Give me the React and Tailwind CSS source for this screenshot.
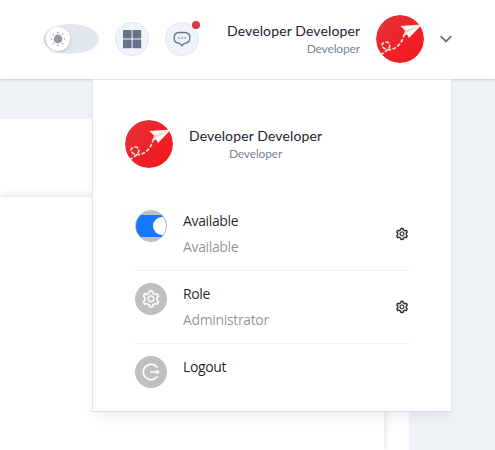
import React from "react";
import { AiOutlineSetting, AiOutlineLogout } from "react-icons/ai";

function Avatar() {
  return (
    <svg className="size-12 shrink-0 rounded-full" viewBox="0 0 48 48" fill="none">
      <defs>
        <linearGradient id="red" x1="0" y1="0" x2="1" y2="1">
          <stop offset="0" stopColor="#e4343c" />
          <stop offset=".6" stopColor="#f01f26" />
          <stop offset="1" stopColor="#f51820" />
        </linearGradient>
      </defs>
      <circle cx="24" cy="24" r="24" fill="url(#red)" />
      <path
        d="M4.500 40C8 37.500 12.500 35 13.500 32C14.500 29 12.500 26.800 10 27C6.500 27.300 4.800 30 6.800 32.300C9 34.800 14 35.500 18 33.500C23 31 27 26 28.500 18"
        stroke="#fbe3d5"
        strokeWidth="1.700"
        strokeDasharray="3.800 1.600"
      />
      <path d="M24.500 11L46 9.500L33 23L31 19.500L28 20.500L29 15.500Z" fill="#fff8f1" />
      <path d="M29 15.500L44 10.500L31 17.500L28 20.500Z" fill="#eed1c3" />
    </svg>
  );
}

function ThemeToggle() {
  return (
    <div className="flex h-[30px] w-14 shrink-0 items-center rounded-[50%] bg-[#e2e8f0] pl-[3px]">
      <span className="flex size-6 items-center justify-center rounded-full bg-white shadow-[0_1px_3px_rgba(0,0,0,0.2)]">
        <svg className="size-4" viewBox="0 0 16 16" fill="#969aa1">
          <circle cx="8" cy="8" r="4.400" />
          <circle cx="8" cy="1.500" r=".75" />
          <circle cx="8" cy="14.500" r=".75" />
          <circle cx="1.500" cy="8" r=".75" />
          <circle cx="14.500" cy="8" r=".75" />
          <circle cx="3.400" cy="3.400" r=".75" />
          <circle cx="12.600" cy="3.400" r=".75" />
          <circle cx="3.400" cy="12.600" r=".75" />
          <circle cx="12.600" cy="12.600" r=".75" />
        </svg>
      </span>
    </div>
  );
}

function Header() {
  return (
    <header className="relative flex h-[79px] items-center bg-white pb-px pl-[43px] shadow-[0_1px_3px_rgba(0,0,0,0.18)]">
      <ThemeToggle />
      <button className="ml-4 flex size-[34px] shrink-0 items-center justify-center rounded-full border border-[#e2e8f0] bg-[#eff4fb]">
        <svg className="size-[20px]" viewBox="0 0 20 20" fill="#64748b">
          <rect x="1" y="1" width="8.600" height="8.600" rx=".6" />
          <rect x="10.600" y="1" width="8.600" height="8.600" rx=".6" />
          <rect x="1" y="10.600" width="8.600" height="8.600" rx=".6" />
          <rect x="10.600" y="10.600" width="8.600" height="8.600" rx=".6" />
        </svg>
      </button>
      <button className="relative ml-4 flex size-[34px] shrink-0 items-center justify-center rounded-full border border-[#e2e8f0] bg-[#eff4fb]">
        <svg className="size-[18px]" viewBox="0 0 18 18" fill="none" stroke="#64748b">
          <path
            d="M6.300 2.500H11.700C15 2.500 16.900 4.800 16.900 8C16.900 11.300 14.700 13.100 11.500 13.300L8.700 15.700L7 13.400C3.200 13.200 1.100 11.300 1.100 8C1.100 4.800 3 2.500 6.300 2.500Z"
            strokeWidth="1.350"
            strokeLinejoin="round"
          />
          <g fill="#64748b" stroke="none">
            <circle cx="5.800" cy="8" r=".8" />
            <circle cx="9" cy="8" r=".8" />
            <circle cx="12.200" cy="8" r=".8" />
          </g>
        </svg>
        <span className="absolute -top-[2px] -right-[2px] size-2 rounded-full bg-[#dc3545]" />
      </button>
      <div className="ml-7 w-[133px] shrink-0 text-right font-[family-name:Lato,sans-serif]">
        <div className="text-sm/5 tracking-[0.12px] whitespace-nowrap text-[#1c2434]">Developer Developer</div>
        <div className="text-xs/4 tracking-[-0.15px] text-[#64748b]/90">Developer</div>
      </div>
      <div className="ml-4">
        <Avatar />
      </div>
      <svg className="ml-4 h-2 w-3" viewBox="0 0 12 8" fill="none">
        <path d="M.6 1.200L6 6.500L11.400 1.200" stroke="#64748b" strokeWidth="1.800" />
      </svg>
    </header>
  );
}

function StatusSwitch() {
  return (
    <span className="flex size-8 shrink-0 items-center overflow-hidden rounded-full border border-[#bfbfbf] bg-[#bfbfbf]">
      <span className="flex h-[22px] w-[30px] items-center bg-[#1677ff] pl-[17px]">
        <span className="size-[18px] shrink-0 rounded-full bg-white" />
      </span>
    </span>
  );
}

function IconCircle({ children }) {
  return (
    <span className="flex size-8 shrink-0 items-center justify-center rounded-full bg-[#bfbfbf] text-white">
      {children}
    </span>
  );
}

function MenuItem({ icon, title, detail }) {
  return (
    <li className="flex items-center border-b border-[#f0f0f0] py-3 last:border-b-0">
      <div className="flex flex-1 items-start gap-4">
        {icon}
        <div className="font-[family-name:Open_Sans,sans-serif] text-[14px]/[22px] tracking-[-0.35px]">
          <div className="text-black/88">{title}</div>
          {detail && <div className="mt-1 text-black/45">{detail}</div>}
        </div>
      </div>
      {detail && <AiOutlineSetting className="size-3.5 stroke-black stroke-[16px] text-black/88" />}
    </li>
  );
}

function UserMenu() {
  return (
    <div className="absolute top-[79px] left-[92px] h-[333px] w-[360px] border border-[#dfe5ef] border-b-[#d5ddea] bg-white shadow-[0_8px_13px_-3px_rgba(0,0,0,0.07)]">
      <div className="flex items-center gap-4 pt-10 pl-8">
        <Avatar />
        <div className="text-center font-[family-name:Lato,sans-serif]">
          <div className="text-sm/5 tracking-[0.12px] whitespace-nowrap text-[#1c2434]">Developer Developer</div>
          <div className="text-xs/4 tracking-[-0.15px] text-[#64748b]/90">Developer</div>
        </div>
      </div>
      <ul className="mt-[30px] ml-[42px] w-[274px]">
        <MenuItem icon={<StatusSwitch />} title="Available" detail="Available" />
        <MenuItem icon={<IconCircle><AiOutlineSetting className="size-5 stroke-white stroke-[10px]" /></IconCircle>} title="Role" detail="Administrator" />
        <MenuItem icon={<IconCircle><AiOutlineLogout className="size-5 stroke-white stroke-[10px]" /></IconCircle>} title="Logout" />
      </ul>
    </div>
  );
}

export default function App() {
  return (
    <div className="relative flex h-[450px] w-[495px] flex-col overflow-hidden bg-[#eff3f8]">
      <Header />
      <main className="mt-10 flex w-[409px] flex-1 flex-col bg-white">
        <div className="h-[78px] w-[385px]" />
        <div className="w-[384px] flex-1 bg-white shadow-[0_0_8px_rgba(0,0,0,0.14)]" />
      </main>
      <UserMenu />
    </div>
  );
}
